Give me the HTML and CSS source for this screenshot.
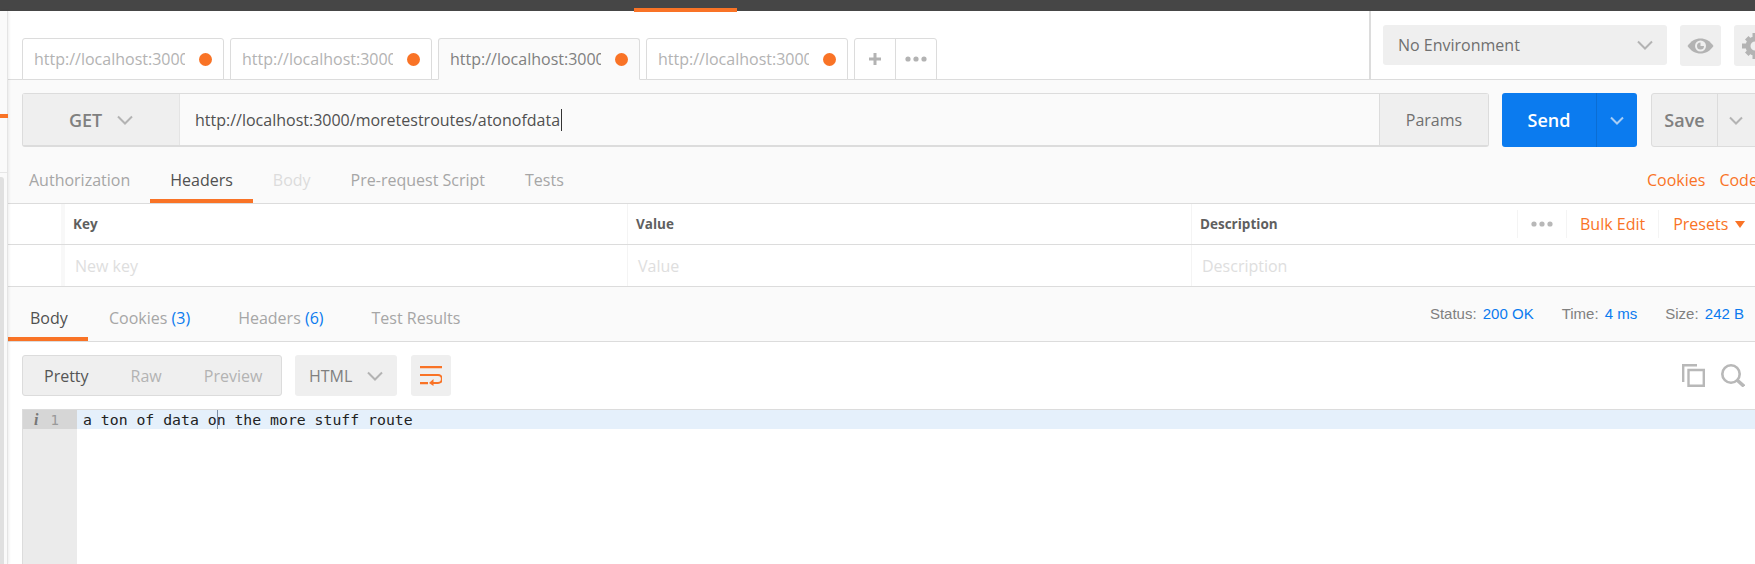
FILE: index.html
```html
<!DOCTYPE html>
<html lang="en">
<head>
  <meta charset="UTF-8">
  <title>Postman</title>
  <link rel="stylesheet" href="styles.css">
</head>
<body>
  <div class="topbar"><span class="topbar_mark"></span></div>
  <div class="app">
    <div class="sidebar">
      <span class="sidebar_mark"></span>
      <span class="sidebar_line"></span>
      <span class="sidebar_field"></span>
    </div>
    <div class="main">
      <div class="tabbar">
        <div class="tabs">
          <div class="tab"><span class="tab_title">http://localhost:3000/api</span><span class="dot"></span></div>
          <div class="tab"><span class="tab_title">http://localhost:3000/api</span><span class="dot"></span></div>
          <div class="tab tab_active"><span class="tab_title">http://localhost:3000/</span><span class="dot"></span></div>
          <div class="tab"><span class="tab_title">http://localhost:3000/api</span><span class="dot"></span></div>
          <div class="tab_tools">
            <div class="tab_tool">
              <svg width="14" height="14" viewBox="0 0 14 14"><path d="M5.500 1h3v4.500H13v3H8.500V13h-3V8.500H1v-3h4.500z" fill="#b3b3b3"/></svg>
            </div>
            <div class="tab_tool">
              <svg width="22" height="6" viewBox="0 0 22 6"><circle cx="3" cy="3" r="2.600" fill="#b3b3b3"/><circle cx="11" cy="3" r="2.600" fill="#b3b3b3"/><circle cx="19" cy="3" r="2.600" fill="#b3b3b3"/></svg>
            </div>
          </div>
        </div>
        <div class="env">
          <div class="env_select">
            <span>No Environment</span>
            <svg width="16" height="10" viewBox="0 0 16 10"><path d="M1 1.500 8 8.500l7-7" fill="none" stroke="#b3b3b3" stroke-width="2"/></svg>
          </div>
          <div class="env_button">
            <svg width="27" height="16" viewBox="0 0 27 16"><path d="M0.500 8C4 2.800 8.500 0.500 13.500 0.500S23 2.800 26.500 8C23 13.200 18.500 15.500 13.500 15.500S4 13.200 0.500 8z" fill="#b3b3b3"/><circle cx="13.500" cy="8" r="5.500" fill="#efefef"/><path d="M13.500 4.500A3.500 3.500 0 1 0 17 8h-3.500z" fill="#b3b3b3"/></svg>
          </div>
          <div class="env_button env_button_cut">
            <svg width="26" height="26" viewBox="0 0 26 26"><circle cx="13" cy="13" r="7" fill="none" stroke="#b3b3b3" stroke-width="5"/><path d="M10.500 0h5v5h-5zM10.500 21h5v5h-5zM0 10.500h5v5H0zM21 10.500h5v5h-5z" fill="#b3b3b3"/><path d="M3 6.500 6.500 3l4 4L7 10.500zM19.500 23 23 19.500l-4-4-3.500 3.500zM23 6.500 19.500 3l-4 4 3.500 3.500zM6.500 23 3 19.500l4-4 3.500 3.500z" fill="#b3b3b3"/></svg>
          </div>
        </div>
      </div>

      <div class="request">
        <div class="url_row">
          <div class="url_group">
            <div class="method">
              <span>GET</span>
              <svg width="16" height="10" viewBox="0 0 16 10"><path d="M1 1.500 8 8.500l7-7" fill="none" stroke="#b3b3b3" stroke-width="2"/></svg>
            </div>
            <div class="url_input"><span>http://localhost:3000/moretestroutes/atonofdata</span><span class="caret"></span></div>
            <div class="params">Params</div>
          </div>
          <div class="send">
            <span class="send_label">Send</span>
            <span class="send_more"><svg width="14" height="9" viewBox="0 0 14 9"><path d="M1 1.500 7 7.500l6-6" fill="none" stroke="#a8cdf5" stroke-width="2"/></svg></span>
          </div>
          <div class="save">
            <span class="save_label">Save</span>
            <span class="save_more"><svg width="14" height="9" viewBox="0 0 14 9"><path d="M1 1.500 7 7.500l6-6" fill="none" stroke="#b3b3b3" stroke-width="2"/></svg></span>
          </div>
        </div>

        <div class="req_tabs">
          <span class="req_tab">Authorization</span>
          <span class="req_tab req_tab_on">Headers</span>
          <span class="req_tab req_tab_body">Body</span>
          <span class="req_tab">Pre-request Script</span>
          <span class="req_tab">Tests</span>
          <span class="req_links"><span>Cookies</span><span>Code</span></span>
        </div>
      </div>

      <div class="kv_table">
        <div class="kv_row kv_head">
          <span class="kv_check"></span>
          <span class="kv_key">Key</span>
          <span class="kv_val">Value</span>
          <span class="kv_desc">Description</span>
          <span class="kv_tools">
            <span class="kv_more"><svg width="22" height="6" viewBox="0 0 22 6"><circle cx="3" cy="3" r="2.600" fill="#b8b8b8"/><circle cx="11" cy="3" r="2.600" fill="#b8b8b8"/><circle cx="19" cy="3" r="2.600" fill="#b8b8b8"/></svg></span>
            <span class="kv_bulk">Bulk Edit</span>
            <span class="kv_presets">Presets<i class="caret_down"></i></span>
          </span>
        </div>
        <div class="kv_row kv_new">
          <span class="kv_check"></span>
          <span class="kv_key">New key</span>
          <span class="kv_val">Value</span>
          <span class="kv_desc">Description</span>
        </div>
      </div>

      <div class="res_tabs">
        <span class="res_tab res_tab_on">Body</span>
        <span class="res_tab">Cookies <b>(3)</b></span>
        <span class="res_tab">Headers <b>(6)</b></span>
        <span class="res_tab">Test Results</span>
        <div class="res_meta">
          <span>Status: <b>200 OK</b></span>
          <span>Time: <b>4 ms</b></span>
          <span>Size: <b>242 B</b></span>
        </div>
      </div>

      <div class="res_body">
        <div class="res_tools">
          <div class="view_group">
            <span class="view_on">Pretty</span>
            <span>Raw</span>
            <span>Preview</span>
          </div>
          <div class="lang">
            <span>HTML</span>
            <svg width="16" height="10" viewBox="0 0 16 10"><path d="M1 1.500 8 8.500l7-7" fill="none" stroke="#b3b3b3" stroke-width="2"/></svg>
          </div>
          <div class="wrap_btn">
            <svg width="22" height="20" viewBox="0 0 22 20"><path d="M0 0h22v2.200H0zM0 16h8v2.200H0z" fill="#f97326"/><path d="M0 9h18a3.500 3.500 0 0 1 0 8h-6" fill="none" stroke="#f97326" stroke-width="2.200"/><path d="M13.500 13 9 17l4.500 3z" fill="#f97326"/></svg>
          </div>
          <div class="res_icons">
            <svg width="23" height="23" viewBox="0 0 23 23"><path d="M15 1.200H1.200V18" fill="none" stroke="#b8b8b8" stroke-width="2.400"/><path d="M6.500 6h15.300v15.800H6.500z" fill="none" stroke="#b8b8b8" stroke-width="2.400"/></svg>
            <svg width="24" height="23" viewBox="0 0 24 23"><circle cx="10" cy="10" r="8.700" fill="none" stroke="#b8b8b8" stroke-width="2.600"/><path d="m16 16 7 6.300" stroke="#b8b8b8" stroke-width="3.500"/></svg>
          </div>
        </div>

        <div class="editor">
          <div class="gutter">
            <div class="gutter_on"><i class="info">i</i><span>1</span></div>
          </div>
          <div class="code">
            <div class="code_line">a ton of data on the more stuff route<span class="code_caret"></span></div>
          </div>
        </div>
      </div>
    </div>
  </div>
</body>
</html>
```

FILE: styles.css
```css
html, body {
  margin: 0;
  height: 100%;
  overflow: hidden;
}
body {
  width: 1755px;
  height: 564px;
  font-family: "Open Sans", "Noto Sans", sans-serif;
  font-size: 16px;
  color: #808080;
  background: #fff;
}
svg {
  display: block;
  flex: none;
}

.topbar {
  height: 11px;
  background: #464646;
  position: relative;
}
.topbar_mark {
  position: absolute;
  left: 634px;
  bottom: -1px;
  width: 103px;
  height: 4px;
  background: #f97326;
}

.app {
  display: flex;
  height: 553px;
}
.sidebar {
  position: relative;
  width: 7px;
  flex: none;
  background: #fafafa;
  border-right: 1px solid #e4e4e4;
  box-shadow: 1px 0 3px rgba(0,0,0,.07);
}
.sidebar_mark {
  position: absolute;
  left: 0;
  top: 103px;
  width: 8px;
  height: 4px;
  background: #f97326;
}
.sidebar_line {
  position: absolute;
  left: 0;
  top: 161px;
  width: 7px;
  height: 1px;
  background: #e6e6e6;
}
.sidebar_field {
  position: absolute;
  left: 0;
  top: 166px;
  width: 4px;
  bottom: 0;
  background: #e0e0e0;
  border-radius: 0 3px 0 0;
}
.main {
  flex: 1;
  min-width: 0;
}

/* tabs + environment */
.tabbar {
  display: flex;
  height: 68px;
  border-bottom: 1px solid #dcdcdc;
}
.tabs {
  flex: 1;
  display: flex;
  align-items: flex-end;
  gap: 6px;
  padding-left: 14px;
}
.tab {
  box-sizing: border-box;
  width: 202px;
  height: 42px;
  margin-bottom: -1px;
  display: flex;
  align-items: center;
  padding: 0 11px;
  border: 1px solid #dcdcdc;
  border-radius: 3px 3px 0 0;
  background: #fff;
}
.tab_title {
  width: 151px;
  overflow: hidden;
  white-space: nowrap;
  color: #b3b3b3;
}
.tab_active {
  background: #fafafa;
  border-bottom-color: #fafafa;
}
.tab_active .tab_title {
  color: #808080;
}
.dot {
  width: 13px;
  height: 13px;
  margin-left: auto;
  border-radius: 50%;
  background: #f97326;
}
.tab_tools {
  display: flex;
  height: 42px;
  margin-bottom: -1px;
  box-sizing: border-box;
  border: 1px solid #dcdcdc;
  border-radius: 3px 3px 0 0;
}
.tab_tool {
  width: 40px;
  display: flex;
  align-items: center;
  justify-content: center;
}
.tab_tool + .tab_tool {
  border-left: 1px solid #dcdcdc;
}
.env {
  width: 386px;
  flex: none;
  box-sizing: border-box;
  border-left: 2px solid #dcdcdc;
  display: flex;
  gap: 13px;
  padding: 14px 0 0 12px;
  overflow: hidden;
}
.env_select {
  box-sizing: border-box;
  width: 284px;
  height: 40px;
  flex: none;
  display: flex;
  align-items: center;
  justify-content: space-between;
  padding: 0 14px 0 15px;
  background: #efefef;
  border-radius: 3px;
  color: #707070;
}
.env_button {
  width: 41px;
  height: 41px;
  flex: none;
  display: flex;
  align-items: center;
  justify-content: center;
  background: #efefef;
  border-radius: 3px;
}
.env_button_cut {
  width: 60px;
  justify-content: flex-start;
  padding-left: 8px;
}

/* request */
.request {
  background: #fafafa;
  height: 123px;
  border-bottom: 1px solid #dcdcdc;
}
.url_row {
  display: flex;
  padding: 13px 0 0 14px;
  height: 54px;
}
.url_group {
  box-sizing: border-box;
  width: 1467px;
  height: 54px;
  flex: none;
  display: flex;
  border: 1px solid #dcdcdc;
  border-bottom-width: 2px;
  border-radius: 3px;
}
.method {
  width: 157px;
  flex: none;
  box-sizing: border-box;
  display: flex;
  align-items: center;
  gap: 15px;
  padding-left: 46px;
  background: #efefef;
  font-size: 18px;
  font-weight: 600;
  border-right: 1px solid #e4e4e4;
}
.url_input {
  flex: 1;
  display: flex;
  align-items: center;
  padding-left: 15px;
  color: #505050;
}
.caret {
  width: 1px;
  height: 22px;
  margin-left: 1px;
  background: #333;
}
.params {
  width: 109px;
  flex: none;
  box-sizing: border-box;
  display: flex;
  align-items: center;
  justify-content: center;
  background: #efefef;
  border-left: 1px solid #dcdcdc;
  color: #707070;
}
.send {
  width: 135px;
  flex: none;
  height: 54px;
  margin-left: 13px;
  display: flex;
  background: #0b7bef;
  border-radius: 3px;
  color: #fff;
  font-size: 18px;
  font-weight: 600;
}
.send_label {
  width: 94px;
  display: flex;
  align-items: center;
  justify-content: center;
}
.send_more {
  flex: 1;
  border-left: 1px solid #0a6dd4;
  display: flex;
  align-items: center;
  justify-content: center;
}
.save {
  width: 110px;
  flex: none;
  box-sizing: border-box;
  height: 54px;
  margin-left: 14px;
  display: flex;
  background: #efefef;
  border: 1px solid #dcdcdc;
  border-radius: 3px;
  font-size: 18px;
  font-weight: 600;
}
.save_label {
  width: 65px;
  display: flex;
  align-items: center;
  justify-content: center;
}
.save_more {
  width: 38px;
  box-sizing: border-box;
  padding-left: 11px;
  border-left: 1px solid #dcdcdc;
  display: flex;
  align-items: center;
}
.req_tabs {
  display: flex;
  align-items: flex-start;
  height: 56px;
  padding-left: 1px;
  white-space: nowrap;
}
.req_tab {
  height: 56px;
  box-sizing: border-box;
  padding: 22px 20px 0;
  color: #a6a6a6;
}
.req_tab_on {
  color: #505050;
  border-bottom: 4px solid #f97326;
}
.req_tab_body {
  color: #dcdcdc;
}
.req_links {
  margin-left: auto;
  display: flex;
  gap: 14px;
  padding-top: 22px;
  color: #f97326;
  width: 108px;
}

/* key / value table */
.kv_table {
  background: #fff;
}
.kv_row {
  display: flex;
  height: 40px;
  align-items: stretch;
  border-bottom: 1px solid #dcdcdc;
}
.kv_new {
  height: 41px;
}
.kv_row > span {
  display: flex;
  align-items: center;
}
.kv_check {
  width: 53px;
  flex: none;
  border-right: 4px solid #f8f8f8;
}
.kv_key, .kv_val {
  padding-left: 8px;
  flex: none;
  border-right: 1px solid #f4f4f4;
  box-sizing: border-box;
}
.kv_key {
  width: 563px;
}
.kv_val {
  width: 564px;
}
.kv_desc {
  padding-left: 8px;
  flex: 1;
}
.kv_head {
  font-size: 13.5px;
  font-weight: 700;
  color: #5f5f5f;
}
.kv_new span {
  padding-left: 10px;
  font-size: 16px;
  font-weight: 400;
  color: #dedede;
}
.kv_new .kv_check {
  padding-left: 0;
}
.kv_row > .kv_tools {
  width: 238px;
  flex: none;
  font-size: 16px;
  font-weight: 400;
  color: #f97326;
}
.kv_tools > span {
  display: flex;
  align-items: center;
  height: 28px;
  border-left: 1px solid #f4f4f4;
}
.kv_more {
  padding: 0 13px;
}
.kv_bulk {
  padding: 0 13px;
}
.kv_presets {
  padding-left: 14px;
}
.caret_down {
  margin-left: 7px;
  border: 5.500px solid transparent;
  border-top: 7px solid #f97326;
  border-bottom: 0;
}

/* response */
.res_tabs {
  height: 54px;
  display: flex;
  align-items: flex-start;
  background: #fafafa;
  border-bottom: 1px solid #dcdcdc;
  white-space: nowrap;
}
.res_tab {
  height: 54px;
  box-sizing: border-box;
  padding: 20px 24px 0;
  color: #a6a6a6;
}
.res_tab b {
  font-weight: 400;
  color: #0b7bef;
}
.res_tab_on {
  width: 80px;
  padding: 20px 0 0 22px;
  margin-right: -3px;
  color: #505050;
  border-bottom: 4px solid #f97326;
}
.res_meta {
  margin-left: auto;
  display: flex;
  gap: 28px;
  padding: 18px 11px 0 0;
  font-family: "Liberation Sans", Arial, sans-serif;
  font-size: 15px;
  color: #808080;
}
.res_meta b {
  font-weight: 400;
  color: #0b7bef;
  margin-left: 2px;
}
.res_body {
  background: #fff;
}
.res_tools {
  display: flex;
  align-items: center;
  padding: 13px 0 0 14px;
  height: 41px;
}
.view_group {
  box-sizing: border-box;
  width: 260px;
  height: 41px;
  display: flex;
  align-items: center;
  gap: 42px;
  padding-left: 21px;
  background: #efefef;
  border: 1px solid #dcdcdc;
  border-radius: 3px;
  color: #b3b3b3;
}
.view_on {
  color: #555;
}
.lang {
  box-sizing: border-box;
  width: 102px;
  height: 41px;
  margin-left: 13px;
  display: flex;
  align-items: center;
  gap: 15px;
  padding-left: 14px;
  background: #efefef;
  border-radius: 3px;
}
.wrap_btn {
  width: 40px;
  height: 41px;
  margin-left: 14px;
  display: flex;
  align-items: center;
  justify-content: center;
  background: #efefef;
  border-radius: 3px;
}
.res_icons {
  margin-left: auto;
  display: flex;
  gap: 16px;
  padding-right: 10px;
}
.editor {
  display: flex;
  margin: 13px 0 0 14px;
  height: 155px;
  border-top: 1px solid #dcdcdc;
  border-left: 1px solid #dcdcdc;
}
.gutter {
  width: 54px;
  flex: none;
  background: #ebebeb;
}
.gutter_on {
  height: 19px;
  display: flex;
  align-items: center;
  justify-content: flex-end;
  gap: 12px;
  padding-right: 18px;
  background: #d6d6d6;
  font-family: "DejaVu Sans Mono", monospace;
  font-size: 14px;
  color: #999;
}
.info {
  font-family: "Liberation Serif", serif;
  font-weight: 700;
  font-style: italic;
  font-size: 16px;
  color: #777;
}
.code {
  flex: 1;
}
.code_line {
  position: relative;
  height: 19px;
  line-height: 19px;
  padding-left: 6px;
  background: #e5f0fb;
  font-family: "DejaVu Sans Mono", monospace;
  font-size: 14.800px;
  color: #222;
  white-space: pre;
}
.code_caret {
  position: absolute;
  left: 140px;
  top: 0;
  width: 1px;
  height: 19px;
  background: #7a8ea6;
}
```
